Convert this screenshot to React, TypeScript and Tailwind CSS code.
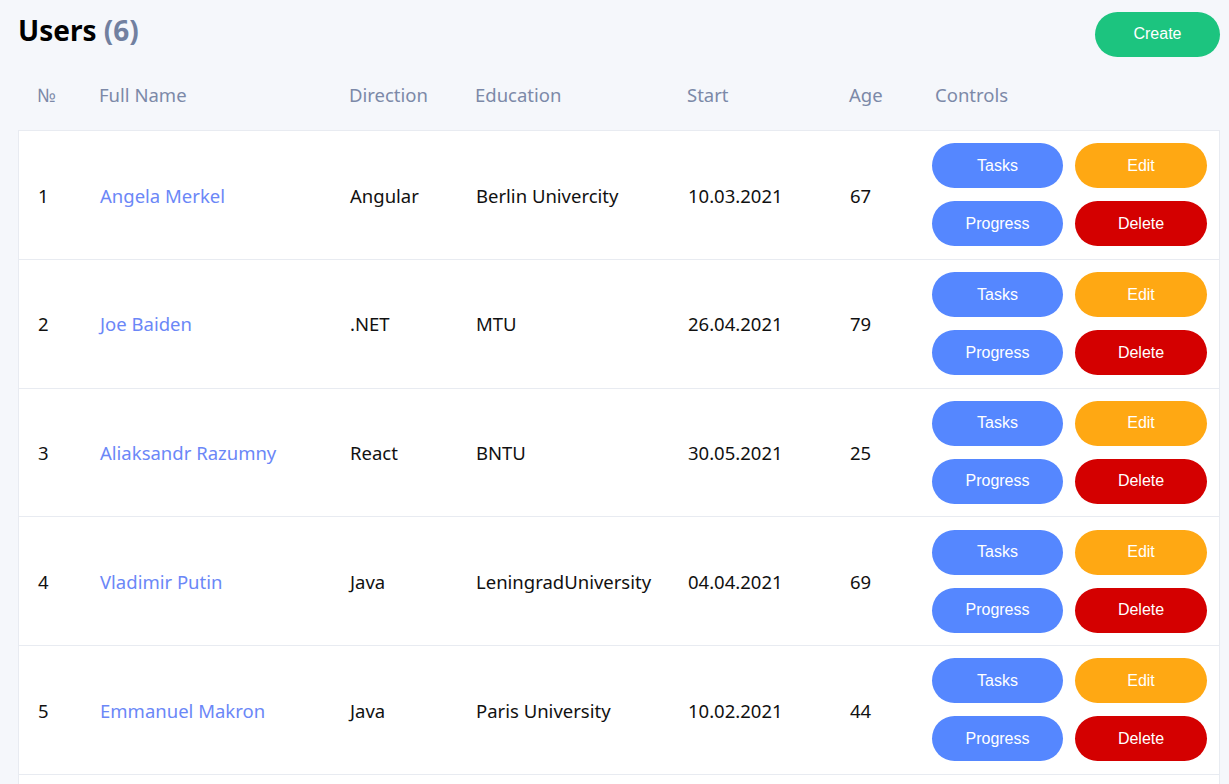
import React from "react";

interface User {
  id: number;
  name: string;
  direction: string;
  education: string;
  start: string;
  age: number;
}

const users: User[] = [
  { id: 1, name: "Angela Merkel", direction: "Angular", education: "Berlin Univercity", start: "10.03.2021", age: 67 },
  { id: 2, name: "Joe Baiden", direction: ".NET", education: "MTU", start: "26.04.2021", age: 79 },
  { id: 3, name: "Aliaksandr Razumny", direction: "React", education: "BNTU", start: "30.05.2021", age: 25 },
  { id: 4, name: "Vladimir Putin", direction: "Java", education: "LeningradUniversity", start: "04.04.2021", age: 69 },
  { id: 5, name: "Emmanuel Makron", direction: "Java", education: "Paris University", start: "10.02.2021", age: 44 },
];

const cols = "grid grid-cols-[62px_250px_126px_212px_162px_82px_1fr] items-center";

const Btn: React.FC<{ label: string; color: string }> = ({ label, color }) => (
  <button
    className={`h-[45px] rounded-full text-white text-[16px] font-['Liberation_Sans',Arial,sans-serif] ${color}`}
  >
    {label}
  </button>
);

const UserRow: React.FC<{ user: User }> = ({ user }) => (
  <div className={`${cols} h-[128.75px] border-b border-[#e8ebf1] pl-[19px] text-[18.5px] text-[#111]`}>
    <div className="pt-[1px]">{user.id}</div>
    <div className="pt-[1px] text-[#6b87f7]">{user.name}</div>
    <div className="pt-[1px]">{user.direction}</div>
    <div className="pt-[1px]">{user.education}</div>
    <div className="pt-[1px]">{user.start}</div>
    <div className="pt-[1px]">{user.age}</div>
    <div className="grid grid-cols-[131px_132px] gap-x-3 gap-y-[13px]">
      <Btn label="Tasks" color="bg-[#5587ff]" />
      <Btn label="Edit" color="bg-[#ffa813]" />
      <Btn label="Progress" color="bg-[#5587ff]" />
      <Btn label="Delete" color="bg-[#d40000]" />
    </div>
  </div>
);

export default function App() {
  return (
    <div className="h-[784px] overflow-hidden bg-[#f5f7fb] pl-[18px] pr-[9px] pt-3 font-['Noto_Sans','Open_Sans',sans-serif]">
      <div className="flex items-start justify-between">
        <h1 className="text-[28px] leading-9 font-bold text-black">
          Users <span className="text-[#7180a0]">(6)</span>
        </h1>
        <button className="h-[45px] w-[125px] rounded-full bg-[#1cc47f] pb-px text-white text-[16px] font-['Liberation_Sans',Arial,sans-serif]">
          Create
        </button>
      </div>
      <div className={`${cols} h-[73px] pl-[19px] pt-0.5 text-[18.5px] text-[#7c89a8]`}>
        <div>№</div>
        <div>Full Name</div>
        <div>Direction</div>
        <div>Education</div>
        <div>Start</div>
        <div>Age</div>
        <div className="pl-1">Controls</div>
      </div>
      <div className="bg-white border border-[#e8ebf1] border-b-0">
        {users.map((u) => (
          <UserRow key={u.id} user={u} />
        ))}
        <div className="h-[128px]" />
      </div>
    </div>
  );
}
